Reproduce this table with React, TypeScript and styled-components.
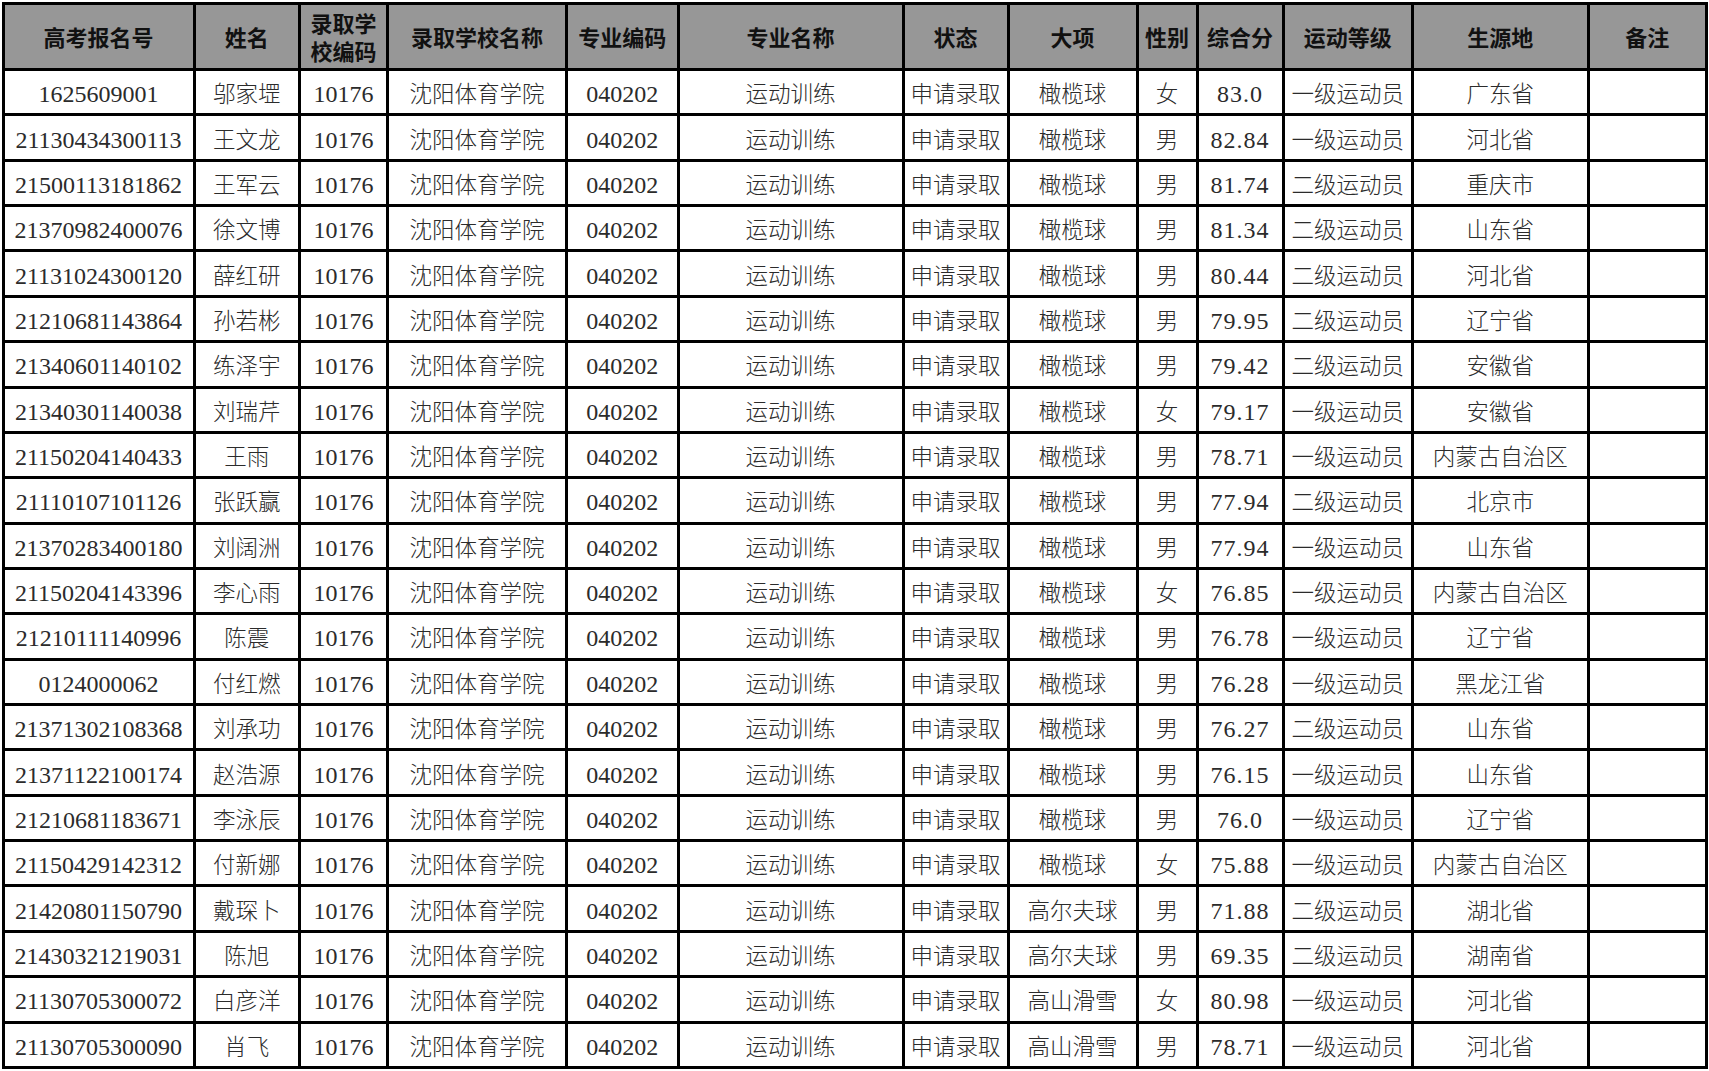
import React from 'react';
import styled, { createGlobalStyle } from 'styled-components';

const GlobalStyle = createGlobalStyle`
  html, body {
    margin: 0;
    padding: 0;
    background: #ffffff;
  }
`;

const Page = styled.div`
  padding: 1.5px 0 0 1.5px;
`;

const Sheet = styled.div`
  display: grid;
  grid-template-columns: 188px 102.5px 85px 176px 108.5px 222px 102px 126px 57px 83px 126.5px 172.5px 115.5px;
  grid-template-rows: 63.5px;
  grid-auto-rows: 42.36px;
  gap: 3px;
  padding: 3px;
  width: max-content;
  background: #000000;
`;

const Row = styled.div`
  display: contents;
`;

const HeadCell = styled.div`
  display: flex;
  align-items: center;
  justify-content: center;
  text-align: center;
  background: #979797;
  color: #111111;
  font-family: "Noto Sans CJK SC", "Liberation Sans", sans-serif;
  font-weight: 700;
  font-size: 22px;
  line-height: 28px;
  overflow: hidden;
`;

const Cell = styled.div<{ $num?: boolean; $score?: boolean }>`
  display: flex;
  align-items: center;
  justify-content: center;
  background: #ffffff;
  color: #2b2b2b;
  font-family: "Liberation Serif", "Noto Sans CJK SC", serif;
  font-weight: 300;
  font-size: ${({ $num }) => ($num ? '24px' : '22.5px')};
  padding-top: ${({ $num }) => ($num ? '5px' : '0')};
  white-space: nowrap;
  overflow: hidden;
  letter-spacing: ${({ $score }) => ($score ? '1px' : '0')};
`;

const headers = [
  '高考报名号',
  '姓名',
  '录取学校编码',
  '录取学校名称',
  '专业编码',
  '专业名称',
  '状态',
  '大项',
  '性别',
  '综合分',
  '运动等级',
  '生源地',
  '备注',
];

type Student = [string, string, string, string, string, string, string];

// 报名号, 姓名, 大项, 性别, 综合分, 运动等级, 生源地
const students: Student[] = [
  ['1625609001', '邬家堽', '橄榄球', '女', '83.0', '一级运动员', '广东省'],
  ['21130434300113', '王文龙', '橄榄球', '男', '82.84', '一级运动员', '河北省'],
  ['21500113181862', '王军云', '橄榄球', '男', '81.74', '二级运动员', '重庆市'],
  ['21370982400076', '徐文博', '橄榄球', '男', '81.34', '二级运动员', '山东省'],
  ['21131024300120', '薛红研', '橄榄球', '男', '80.44', '二级运动员', '河北省'],
  ['21210681143864', '孙若彬', '橄榄球', '男', '79.95', '二级运动员', '辽宁省'],
  ['21340601140102', '练泽宇', '橄榄球', '男', '79.42', '二级运动员', '安徽省'],
  ['21340301140038', '刘瑞芹', '橄榄球', '女', '79.17', '一级运动员', '安徽省'],
  ['21150204140433', '王雨', '橄榄球', '男', '78.71', '一级运动员', '内蒙古自治区'],
  ['21110107101126', '张跃赢', '橄榄球', '男', '77.94', '二级运动员', '北京市'],
  ['21370283400180', '刘阔洲', '橄榄球', '男', '77.94', '一级运动员', '山东省'],
  ['21150204143396', '李心雨', '橄榄球', '女', '76.85', '一级运动员', '内蒙古自治区'],
  ['21210111140996', '陈震', '橄榄球', '男', '76.78', '一级运动员', '辽宁省'],
  ['0124000062', '付红燃', '橄榄球', '男', '76.28', '一级运动员', '黑龙江省'],
  ['21371302108368', '刘承功', '橄榄球', '男', '76.27', '二级运动员', '山东省'],
  ['21371122100174', '赵浩源', '橄榄球', '男', '76.15', '一级运动员', '山东省'],
  ['21210681183671', '李泳辰', '橄榄球', '男', '76.0', '一级运动员', '辽宁省'],
  ['21150429142312', '付新娜', '橄榄球', '女', '75.88', '一级运动员', '内蒙古自治区'],
  ['21420801150790', '戴琛卜', '高尔夫球', '男', '71.88', '二级运动员', '湖北省'],
  ['21430321219031', '陈旭', '高尔夫球', '男', '69.35', '二级运动员', '湖南省'],
  ['21130705300072', '白彦洋', '高山滑雪', '女', '80.98', '一级运动员', '河北省'],
  ['21130705300090', '肖飞', '高山滑雪', '男', '78.71', '一级运动员', '河北省'],
];

const App: React.FC = () => (
  <Page>
    <GlobalStyle />
    <Sheet>
      <Row>
        {headers.map((h) => (
          <HeadCell key={h}>{h === '录取学校编码' ? <span>录取学<br />校编码</span> : h}</HeadCell>
        ))}
      </Row>
      {students.map(([id, name, sport, sex, score, level, origin]) => (
        <Row key={id}>
          <Cell $num>{id}</Cell>
          <Cell>{name}</Cell>
          <Cell $num>10176</Cell>
          <Cell>沈阳体育学院</Cell>
          <Cell $num>040202</Cell>
          <Cell>运动训练</Cell>
          <Cell>申请录取</Cell>
          <Cell>{sport}</Cell>
          <Cell>{sex}</Cell>
          <Cell $num $score>{score}</Cell>
          <Cell>{level}</Cell>
          <Cell>{origin}</Cell>
          <Cell />
        </Row>
      ))}
    </Sheet>
  </Page>
);

export default App;
